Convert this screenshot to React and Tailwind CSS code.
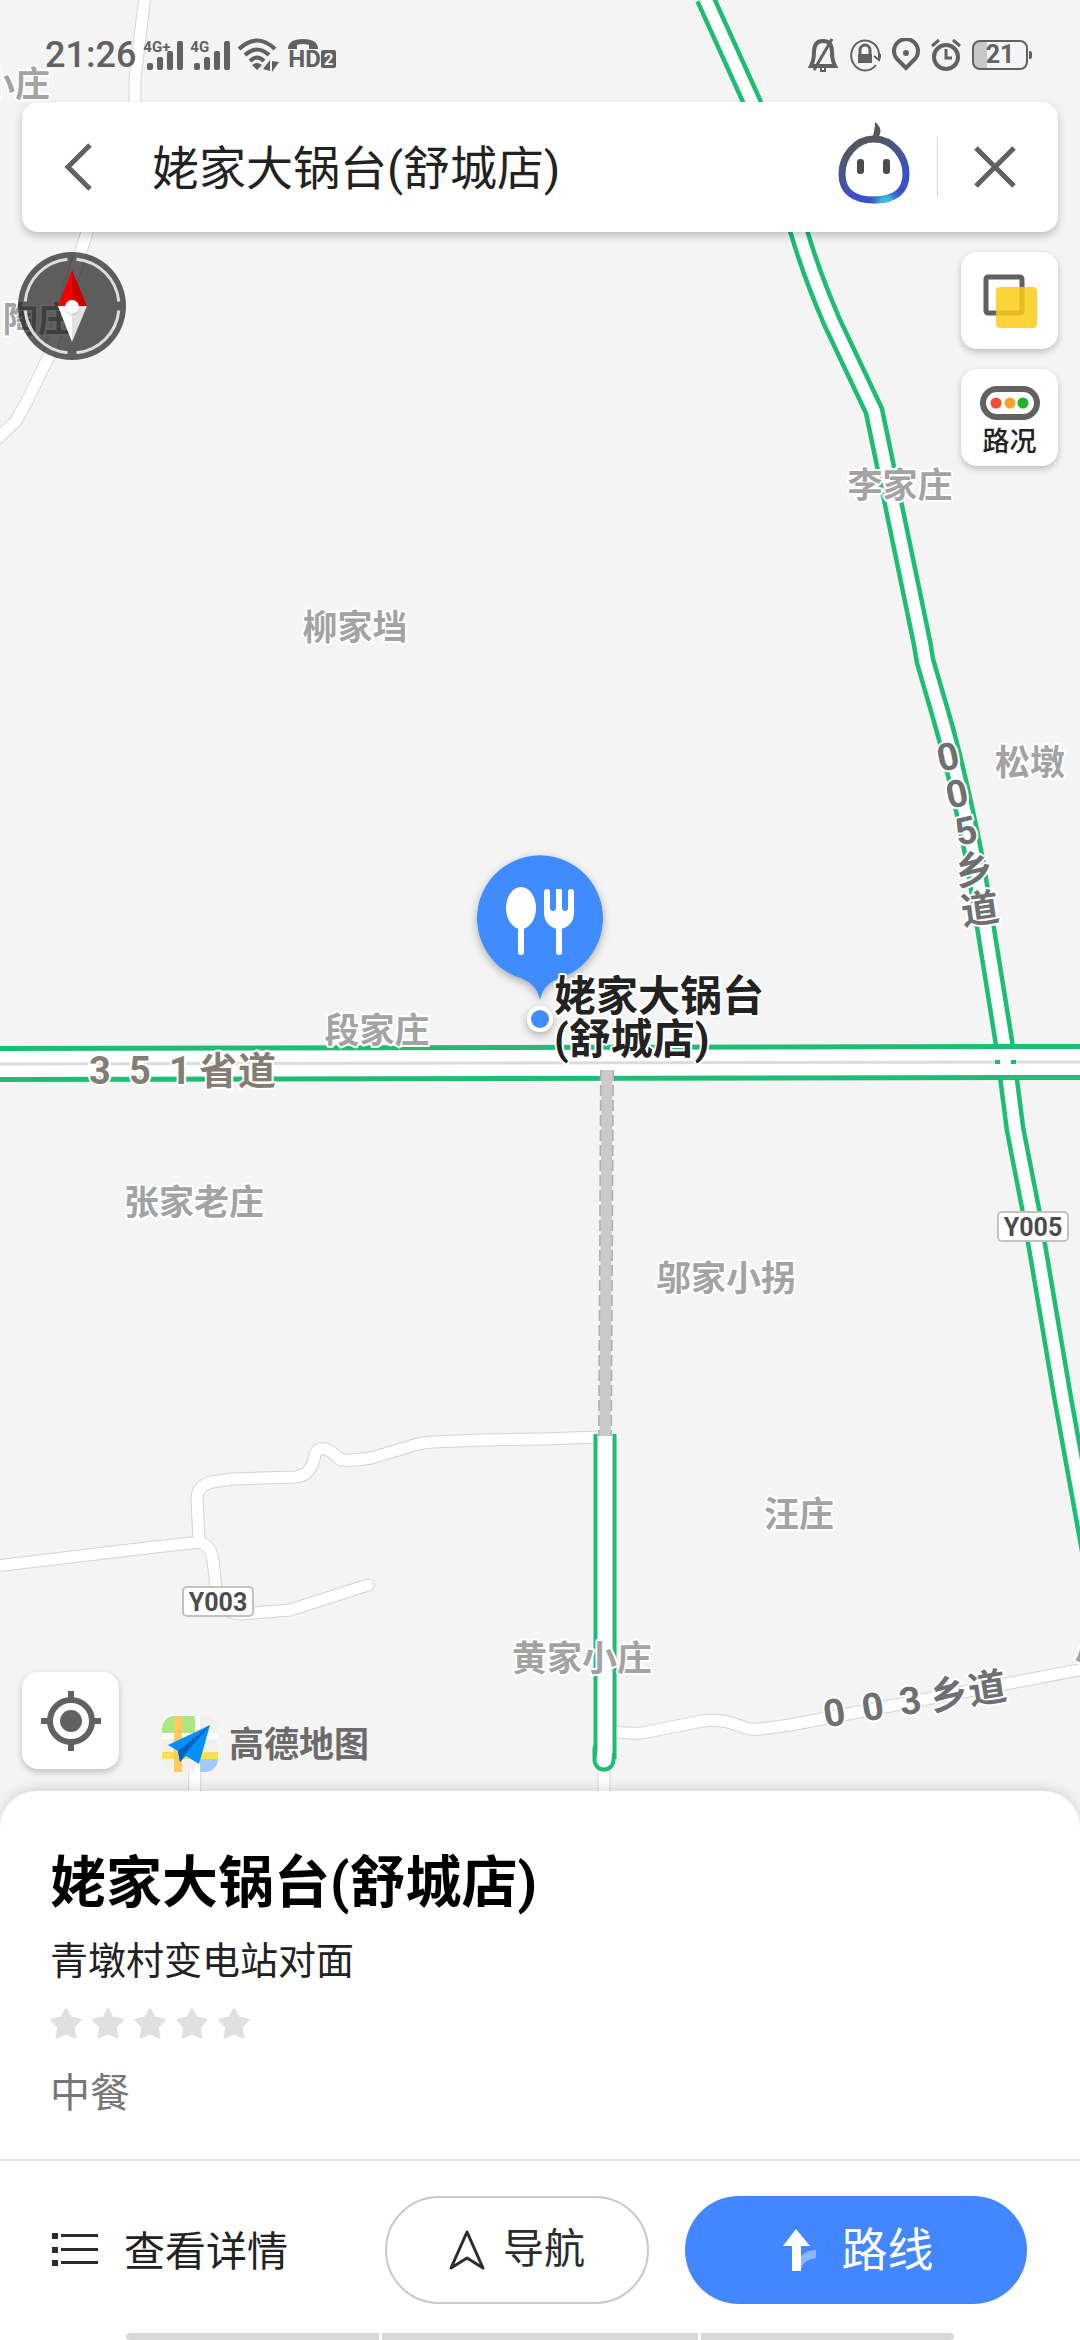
import { useState } from 'react';

const GREEN_ROADS = [
    { id: 'y005', d: 'M705 -2 L752 102 L799 232 Q812 276 832 322 L874 411 L922 643 L925 661 L941 716 Q958 775 975 862 L1004 1043 L1015 1129 L1031 1211 L1063 1400 L1092 1560' },
];

const SMALL_ROADS = [
    'M145 -4 L135 78 L135 104 L87 232 L48 358 L27 401 L16 421 L-4 440',
    'M600 1437 L543 1439 L482 1440 L432 1442 Q418 1443 408 1447 L371 1458 Q355 1461 341 1460 L334 1454 Q320 1443 315 1454 Q312 1476 295 1477 L233 1479 L212 1482 Q198 1485 197 1498 L199 1542',
    'M-4 1566 L155 1547 L200 1542 Q211 1546 213 1560 L216 1588 Q216 1612 241 1614 L290 1610 L368 1585',
    'M612 1731 Q625 1734 642 1733 L702 1721 Q716 1719 728 1722 L746 1728 Q752 1730 760 1729 L790 1725 L1084 1669',
    'M195 1765 L194 1840',
    'M604 1765 L604 1840',
];

const PLACES = [
    { name: '小庄', x: 15, y: 97 },
    { name: '陶庄', x: 38, y: 332 },
    { name: '李家庄', x: 900, y: 498 },
    { name: '柳家垱', x: 355, y: 640 },
    { name: '松墩', x: 1030, y: 775 },
    { name: '段家庄', x: 377, y: 1043 },
    { name: '张家老庄', x: 194, y: 1215 },
    { name: '邬家小拐', x: 726, y: 1291 },
    { name: '汪庄', x: 799, y: 1527 },
    { name: '黄家小庄', x: 582, y: 1671 },
    { name: '小', x: 1092, y: 1667 },
];

const BADGES = [
    { code: 'Y005', x: 997, y: 1211 },
    { code: 'Y003', x: 182, y: 1586 },
];

const HALO = { stroke: '#fff', strokeWidth: 4, strokeLinejoin: 'round', paintOrder: 'stroke' };

const MapCanvas = () => (
    <svg className="absolute left-0 top-0" width="1080" height="1840" viewBox="0 0 1080 1840" fill="none">
        <defs>
            <filter id="pinShadow" x="-30%" y="-30%" width="160%" height="160%">
                <feDropShadow dx="0" dy="3" stdDeviation="4" floodColor="#000" floodOpacity="0.3" />
            </filter>
        </defs>

        {/* Village roads: grey casing first, white fill over it */}
        <g strokeLinejoin="round" strokeLinecap="round">
            {SMALL_ROADS.map((d) => <path key={d} d={d} stroke="#d4d4d4" strokeWidth="13" />)}
            {SMALL_ROADS.map((d) => <path key={d} d={d} stroke="#fff" strokeWidth="11" />)}
        </g>

        {/* Roads with live traffic */}
        {GREEN_ROADS.map((r) => (
            <g key={r.id} strokeLinejoin="round">
                <path d={r.d} stroke="#1dbd74" strokeWidth="21" />
                <path d={r.d} stroke="#fff" strokeWidth="12" />
            </g>
        ))}
        <path d="M605 1434 V1759" stroke="#1dbd74" strokeWidth="23" />
        <path d="M604 1750 V1760" stroke="#1dbd74" strokeWidth="23" strokeLinecap="round" />
        <path d="M605 1434 V1750 L604 1760" stroke="#fff" strokeWidth="15" strokeLinecap="round" />
        <path d="M598 1432 H612" stroke="#fff" strokeWidth="10" />

        {/* Provincial road 351 */}
        <path d="M0 1064 L1080 1062" stroke="#1dbd74" strokeWidth="36" />
        <path d="M0 1064 L1080 1062" stroke="#fff" strokeWidth="26" />
        <path d="M0 1064 L1080 1062" stroke="#dcdcdc" strokeWidth="3" />
        <path d="M995 1062 H1016" stroke="#fff" strokeWidth="4" />
        <path d="M995 1062 h5 M1011 1062 h5" stroke="#1dbd74" strokeWidth="4" />

        {/* Road under construction */}
        <path d="M607 1070 L605 1436" stroke="#f4f4f4" strokeWidth="14" />
        <path d="M607 1070 L605 1436" stroke="#b0afb0" strokeWidth="14" strokeDasharray="11 4" />
        <path d="M607 1070 L605 1436" stroke="#cbc9ca" strokeWidth="11" />

        <g fontSize="35" fontWeight="700" fill="#a3a3a3" textAnchor="middle" {...HALO}>
            {PLACES.map((p) => <text key={p.name + p.x} x={p.x} y={p.y}>{p.name}</text>)}
        </g>

        <g fontSize="38" fontWeight="700" textAnchor="middle" {...HALO}>
            <text x="100 140 180 218 257" y="1084" fill="#857c72">351省道</text>
            <text x="951 960 969 976 982" y="772 809 846 886 925" rotate="-12 -12 -12 -9 -8" fill="#6e7074">005乡道</text>
            <text x="0 39 77 116 155" y="14" transform="translate(834 1712) rotate(-9)" fill="#6e7074">003乡道</text>
        </g>

        {BADGES.map((b) => (
            <g key={b.code}>
                <rect x={b.x + 1} y={b.y + 1} width="70" height="29" rx="4" fill="#fff" stroke="#c2c2c2" strokeWidth="2" />
                <text x={b.x + 36} y={b.y + 25} fontSize="25" fontWeight="700" fill="#4c4c4c" textAnchor="middle">{b.code}</text>
            </g>
        ))}

        {/* Selected place */}
        <g filter="url(#pinShadow)">
            <path d="M540 1000 C537 987 530 981 517 977 A63 63 0 1 1 563 977 C550 981 543 987 540 1000 Z" fill="#3f8cfe" />
            <circle cx="540" cy="1019" r="13" fill="#fff" />
        </g>
        <circle cx="540" cy="1019" r="9" fill="#3f8cfe" />
        <ellipse cx="521" cy="908" rx="15" ry="21" fill="#fff" />
        <path d="M521 925 V952 M559 925 V952" stroke="#fff" strokeWidth="6" strokeLinecap="round" />
        <path d="M544 892 a3 3 0 0 1 6 0 V908 a3 3 0 0 0 6 0 V889 h6 V908 a3 3 0 0 0 6 0 V892 a3 3 0 0 1 6 0 V913 a15 16 0 0 1 -30 0 Z" fill="#fff" />

        <g fontSize="42" fontWeight="700" fill="#222" {...HALO}>
            <text x="554" y="1011">姥家大锅台</text>
            <text x="554" y="1054">(舒城店)</text>
        </g>
    </svg>
);

const Signal = ({ label }) => (
    <div className="relative h-8 w-10">
        <svg width="40" height="32" viewBox="0 0 40 32" fill="#616161">
            <rect x="4" y="24" width="6" height="7" rx="2" />
            <rect x="14" y="18" width="6" height="13" rx="2" />
            <rect x="24" y="12" width="6" height="19" rx="2" />
            <rect x="34" y="2" width="6" height="29" rx="2" />
        </svg>
        <span className="absolute left-0 top-0 text-[15px] leading-4 font-bold">{label}</span>
    </div>
);

const StatusBar = () => (
    <div className="relative flex h-[102px] items-center justify-between pt-2 pl-[45px] pr-12 text-[#616161]">
        <div className="flex items-center gap-[7px]">
            <span className="text-[36px] leading-10 font-medium">21:26</span>
            <Signal label="4G+" />
            <Signal label="4G" />
            <svg width="44" height="34" viewBox="0 0 44 34" fill="none" stroke="#616161" strokeWidth="4">
                <path d="M2 11 Q20 -6 38 11" />
                <path d="M8 17 Q20 6 32 17" />
                <path d="M13 23 Q20 16 27 23" />
                <path d="M15 27 Q20 23 25 27 L20 32 Z" fill="#616161" stroke="none" />
                <path d="M26 31 L33 22 V33 Z M35 34 V23 L42 24 Z" fill="#616161" stroke="none" />
            </svg>
            <div className="flex h-8 w-12 flex-col">
                <svg width="32" height="11" viewBox="0 0 32 11" fill="#616161">
                    <path d="M0 10 Q0 0 15 0 Q30 0 30 10 H21 V6 Q15 4 9 6 V10 Z" />
                </svg>
                <div className="flex items-end">
                    <span className="text-[24px] leading-[18px] font-bold">HD</span>
                    <span className="h-[18px] w-4 rounded-xs bg-[#616161] text-center text-[17px] leading-[18px] font-bold text-[#f4f4f4]">2</span>
                </div>
            </div>
        </div>

        <div className="flex items-center gap-[11px]">
            <svg width="30" height="34" viewBox="0 0 30 34" fill="none" stroke="#616161" strokeWidth="4">
                <path d="M3 28 H27 Q24 22 24 14 Q24 3 15 3 Q6 3 6 14 Q6 22 3 28 Z" />
                <path d="M24 1 L6 32" strokeWidth="3" />
                <path d="M13 30 V33 H17 V30" strokeWidth="2" />
            </svg>
            <svg width="32" height="34" viewBox="0 0 32 34" fill="none" stroke="#616161" strokeWidth="2">
                <path d="M30 20 V15 A14 15 0 1 0 27 27 M25 18 L30 22 L32 16" />
                <rect x="9" y="16" width="14" height="9" fill="#616161" stroke="none" />
                <path d="M11 16 V12 a5 5 0 0 1 10 0 V16" strokeWidth="3" />
            </svg>
            <svg width="28" height="34" viewBox="0 0 28 34" fill="none" stroke="#616161" strokeWidth="4">
                <path d="M14 30 L5 21 A12 12 0 1 1 23 21 Z" />
                <circle cx="14" cy="15" r="3" fill="#616161" stroke="none" />
            </svg>
            <svg width="30" height="34" viewBox="0 0 30 34" fill="none" stroke="#616161" strokeWidth="4">
                <circle cx="15" cy="19" r="12" />
                <path d="M15 11 V20 H21 M1 8 L8 2 M22 2 L29 8" strokeWidth="3" />
            </svg>
            <div className="flex items-center">
                <div className="flex h-[30px] w-14 items-center justify-center rounded-lg border-2 border-[#616161] bg-linear-to-r from-[#c8c8c8] from-25% to-[#f4f4f4] to-25%">
                    <span className="text-[25px] leading-6 font-bold">21</span>
                </div>
                <div className="ml-px h-2 w-[3px] rounded-r-xs bg-[#616161]" />
            </div>
        </div>
    </div>
);

const Robot = () => (
    <svg width="74" height="84" viewBox="0 0 74 84" fill="none">
        <defs>
            <linearGradient id="robotBody" x1="20" y1="14" x2="50" y2="84" gradientUnits="userSpaceOnUse">
                <stop offset="0.1" stopColor="#55565c" />
                <stop offset="0.75" stopColor="#3a52c9" />
            </linearGradient>
            <radialGradient id="robotGlow" cx="49" cy="81" r="19" gradientUnits="userSpaceOnUse">
                <stop offset="0" stopColor="#38c4d8" />
                <stop offset="0.3" stopColor="#38b4d8" />
                <stop offset="1" stopColor="#3a52d0" stopOpacity="0" />
            </radialGradient>
        </defs>
        <path d="M37 18 C56 18 69 36 69 53 C69 70 58 79 37 79 C16 79 5 70 5 53 C5 36 18 18 37 18 Z" stroke="url(#robotBody)" strokeWidth="7" />
        <path d="M37 18 C56 18 69 36 69 53 C69 70 58 79 37 79 C16 79 5 70 5 53 C5 36 18 18 37 18 Z" stroke="url(#robotGlow)" strokeWidth="7" />
        <path d="M38 1 Q47 8 41 17 H35 Q38 10 38 1 Z" fill="#55565a" />
        <rect x="20" y="38" width="7" height="15" rx="3" fill="#4d4d4d" />
        <rect x="46" y="38" width="7" height="15" rx="3" fill="#4d4d4d" />
    </svg>
);

const SearchCard = () => {
    const [query, setQuery] = useState('姥家大锅台(舒城店)');

    return (
        <div className="relative mx-[22px] flex h-[130px] items-center rounded-2xl bg-white shadow-[0_4px_8px_rgba(0,0,0,0.22)]">
            <button className="flex h-full w-[116px] shrink-0 items-center pl-[42px]" aria-label="返回">
                <svg width="28" height="48" viewBox="0 0 28 48" fill="none" stroke="#616161" strokeWidth="5">
                    <path d="M26 2 L4 24 L26 46" />
                </svg>
            </button>
            <input
                aria-label="搜索地点"
                className="h-full min-w-0 flex-1 pb-1.5 pl-[14px] text-[47px] text-[#222] outline-none"
                value={query}
                onChange={(e) => setQuery(e.target.value)}
            />
            <button className="shrink-0 pr-[26px] pb-2" aria-label="语音助手"><Robot /></button>
            <div className="h-[60px] w-px bg-[#d5d5d5]" />
            <button className="flex h-full w-[120px] shrink-0 items-center pl-9" aria-label="关闭" onClick={() => setQuery('')}>
                <svg width="42" height="42" viewBox="0 0 42 42" stroke="#616161" strokeWidth="5">
                    <path d="M2 2 L40 40 M40 2 L2 40" />
                </svg>
            </button>
        </div>
    );
};

const Compass = () => (
    <svg width="108" height="108" viewBox="0 0 108 108" fill="none">
        <circle cx="54" cy="54" r="54" fill="#000" fillOpacity="0.62" />
        <path d="M58.500 7.200 A47 47 0 0 1 100.800 49.500 M100.800 58.500 A47 47 0 0 1 58.500 100.800 M49.500 100.800 A47 47 0 0 1 7.200 58.500 M7.200 49.500 A47 47 0 0 1 49.500 7.200" stroke="#dedede" strokeWidth="3" />
        <path d="M54 18 L40 54 H54 Z" fill="#f40000" />
        <path d="M54 18 L69 54 H54 Z" fill="#cb0000" />
        <path d="M54 90 L40 54 H54 Z" fill="#fff" />
        <path d="M54 90 L69 54 H54 Z" fill="#e2e2e2" />
        <circle cx="54" cy="56" r="7" fill="#000" fillOpacity="0.2" />
        <circle cx="54" cy="55" r="7" fill="#fff" />
    </svg>
);

const TileButton = ({ label, children }) => (
    <button aria-label={label} className="flex size-[97px] flex-col items-center justify-center rounded-2xl bg-white shadow-[0_3px_7px_rgba(0,0,0,0.22)]">
        {children}
    </button>
);

const AmapLogo = () => (
    <svg width="56" height="56" viewBox="0 0 56 56">
        <clipPath id="logoClip"><rect width="56" height="56" rx="13" /></clipPath>
        <g clipPath="url(#logoClip)">
            <rect width="56" height="56" fill="#f1f0ec" />
            <rect width="34" height="17" fill="#ade77f" />
            <rect y="17" width="56" height="6" fill="#fff" />
            <rect x="33" width="5" height="56" fill="#fff" />
            <rect y="36" width="56" height="7" fill="#ffdf4d" />
            <rect x="12" width="8" height="56" fill="#ffc961" />
            <rect x="38" y="43" width="18" height="13" fill="#a6c8ff" />
        </g>
        <path d="M48 9 L6 29 L16 35 L18 46 L24 40 L37 48 Z" fill="#0091ff" />
        <path d="M48 9 L16 35 L18 46 L23 38 Z" fill="#0062bd" />
    </svg>
);

const Star = () => (
    <svg width="32" height="32" viewBox="0 0 32 32" fill="#e0e0e0" stroke="#e0e0e0" strokeWidth="3" strokeLinejoin="round">
        <path d="M16 3 L20 11 L30 13 L23 20 L25 30 L16 26 L7 30 L9 20 L2 13 L12 11 Z" />
    </svg>
);

const PlaceSheet = () => (
    <section className="relative -mt-9 rounded-t-[36px] bg-white shadow-[0_-3px_12px_rgba(0,0,0,0.12)]">
        <div className="px-[50px] pt-14 pb-[37px]">
            <h1 className="text-[56px] leading-[72px] font-bold text-black">姥家大锅台(舒城店)</h1>
            <p className="mt-[14px] text-[38px] leading-[56px] text-[#222]">青墩村变电站对面</p>
            <div className="mt-[18px] flex gap-[10px]">
                {[1, 2, 3, 4, 5].map((n) => <Star key={n} />)}
            </div>
            <p className="mt-[27px] text-[40px] leading-[56px] text-[#777]">中餐</p>
        </div>

        <div className="flex items-center border-t-2 border-[#e2e2e2] pt-[35px] pr-[53px] pb-[29px] pl-[52px]">
            <button className="flex items-center gap-[26px] text-[41px] leading-[56px] text-[#222]">
                <svg width="46" height="36" viewBox="0 0 46 36" fill="#2c2c2c">
                    <path d="M0 1h6v6H0z M0 15h6v6H0z M0 28h6v6H0z M9 2h37v3H9z M9 16h37v3H9z M9 29h37v3H9z" />
                </svg>
                <span className="pt-1">查看详情</span>
            </button>
            <div className="ml-auto flex gap-9">
                <button className="flex h-[108px] w-[264px] items-center justify-center gap-[18px] rounded-full border-2 border-[#c9c9c9] text-[41px] text-[#2c2c2c]">
                    <svg width="36" height="42" viewBox="0 0 36 42" fill="none" stroke="#2c2c2c" strokeWidth="3" strokeLinejoin="round">
                        <path d="M18 3 L2 39 L18 29 L34 39 Z" />
                    </svg>
                    导航
                </button>
                <button className="flex h-[108px] w-[342px] items-center justify-center gap-[26px] rounded-full bg-[#4287ff] pl-1 text-[46px] text-white">
                    <svg width="33" height="42" viewBox="0 0 33 42" fill="#fff">
                        <path d="M13 0 L27 17 H18 V42 H9 V17 H0 Z" />
                        <path d="M18 27 Q24 21 33 21 V29 Q20 31 18 40 Z" fillOpacity="0.4" />
                    </svg>
                    路线
                </button>
            </div>
        </div>

        <div className="flex h-[7px] gap-[3px] px-[126px]">
            <div className="flex-4 rounded-l-full bg-[#d8d8d8]" />
            <div className="flex-5 bg-[#d8d8d8]" />
            <div className="flex-4 rounded-r-full bg-[#d8d8d8]" />
        </div>
    </section>
);

export default function App() {
    return (
        <div className="flex min-h-screen flex-col bg-white font-['Roboto','Noto_Sans_CJK_SC',sans-serif]">
            <main className="relative flex flex-1 flex-col overflow-hidden bg-[#f4f4f4]">
                <MapCanvas />
                <StatusBar />
                <SearchCard />

                <div className="relative flex items-start justify-between pt-5 pr-[22px] pl-[18px]">
                    <Compass />
                    <div className="flex flex-col gap-5">
                        <TileButton label="图层">
                            <svg width="54" height="54" viewBox="0 0 54 54" fill="none">
                                <rect x="3" y="3" width="36" height="36" rx="2" stroke="#616161" strokeWidth="5" />
                                <rect x="13" y="13" width="41" height="41" rx="4" fill="#fbcb15" fillOpacity="0.85" />
                            </svg>
                        </TileButton>
                        <TileButton label="路况">
                            <svg className="mt-2" width="60" height="34" viewBox="0 0 60 34" fill="none">
                                <rect x="3" y="3" width="54" height="28" rx="14" stroke="#616161" strokeWidth="6" />
                                <circle cx="16" cy="17" r="5.500" fill="#fb4a2c" />
                                <circle cx="30" cy="17" r="5.500" fill="#fd9f2b" />
                                <circle cx="43" cy="17" r="5.500" fill="#1fb32c" />
                            </svg>
                            <span className="mt-1.5 text-[27px] leading-8 font-medium text-[#222]">路况</span>
                        </TileButton>
                    </div>
                </div>

                <div className="relative mt-auto flex items-end gap-[43px] pb-[55px] pl-[22px]">
                    <div className="pb-[3px]">
                        <TileButton label="定位">
                            <svg width="60" height="60" viewBox="0 0 60 60" fill="none" stroke="#616161" strokeWidth="6">
                                <circle cx="30" cy="30" r="21" />
                                <path d="M30 0 V9 M30 51 V60 M0 30 H9 M51 30 H60" />
                                <circle cx="30" cy="30" r="11" fill="#616161" stroke="none" />
                            </svg>
                        </TileButton>
                    </div>
                    <div className="flex items-center gap-[11px]">
                        <AmapLogo />
                        <span className="pt-1 text-[35px] leading-[52px] font-bold text-[#6b6b6b]">高德地图</span>
                    </div>
                </div>
            </main>

            <PlaceSheet />
        </div>
    );
}
